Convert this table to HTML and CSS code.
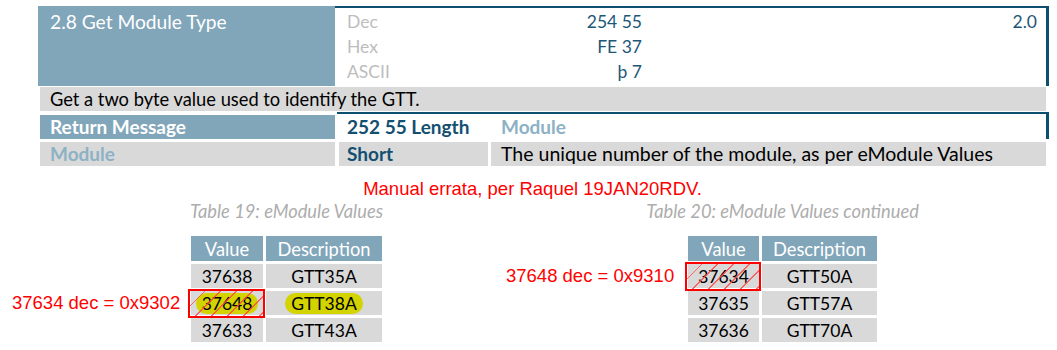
FILE: index.html
```html
<!DOCTYPE html>
<html>
<head>
<meta charset="utf-8">
<link rel="stylesheet" href="styles.css">
</head>
<body>
<div class="spec">
  <div class="cmd">
    <div class="cmd-title">2.8 Get Module Type</div>
    <div class="cmd-body">
      <div class="codes">
        <div class="code-row"><span class="lbl">Dec</span><span class="val">254 55</span></div>
        <div class="code-row"><span class="lbl">Hex</span><span class="val">FE 37</span></div>
        <div class="code-row"><span class="lbl">ASCII</span><span class="val">þ 7</span></div>
      </div>
      <div class="ver">2.0</div>
    </div>
  </div>
  <div class="desc">Get a two byte value used to identify the GTT.</div>
  <div class="ret">
    <div class="ret-title">Return Message</div>
    <div class="ret-body">
      <div class="rc2 dark">252 55 Length</div>
      <div class="rc3 light">Module</div>
    </div>
  </div>
  <div class="row2">
    <div class="c1 light">Module</div>
    <div class="c2 dark">Short</div>
    <div class="c3">The unique number of the module, as per eModule Values</div>
  </div>
</div>
<div class="errata">Manual errata, per Raquel 19JAN20RDV.</div>
<div class="tables">
  <div class="tgroup left">
    <div class="caption">Table 19: eModule Values</div>
    <div class="th col-v">Value</div><div class="th col-d">Description</div>
    <div class="td col-v">37638</div><div class="td col-d">GTT35A</div>
    <div class="note note-r2">37634 dec = 0x9302</div>
    <div class="td col-v mark"><span class="hl">37648</span></div><div class="td col-d"><span class="hl">GTT38A</span></div>
    <div class="td col-v">37633</div><div class="td col-d">GTT43A</div>
  </div>
  <div class="tgroup right">
    <div class="caption">Table 20: eModule Values continued</div>
    <div class="th col-v">Value</div><div class="th col-d">Description</div>
    <div class="note note-r1">37648 dec = 0x9310</div>
    <div class="td col-v mark">37634</div><div class="td col-d">GTT50A</div>
    <div class="td col-v">37635</div><div class="td col-d">GTT57A</div>
    <div class="td col-v">37636</div><div class="td col-d">GTT70A</div>
  </div>
</div>
</body>
</html>
```
FILE: styles.css
```css
* { box-sizing: border-box; }
body {
  margin: 0;
  background: #ffffff;
  font-family: Lato, "Open Sans", sans-serif;
  font-size: 17.5px;
  color: #000;
}
.spec {
  margin-left: 38px;
  width: 1011px;
  padding-top: 6px;
}
.cmd {
  display: flex;
  height: 80px;
}
.cmd-title {
  width: 297px;
  background: #81a6ba;
  color: #fff;
  padding: 3px 12px 0;
  line-height: 25px;
  font-size: 19.2px;
}
.cmd-body {
  flex: 1;
  display: flex;
  border-top: 2px solid #0d4f6e;
  border-right: 3px solid #0d4f6e;
  padding-top: 1px;
}
.codes {
  width: 307px;
  padding-left: 12px;
}
.code-row {
  display: flex;
  justify-content: space-between;
  line-height: 25px;
  height: 25px;
}
.lbl { color: #bdbdbd; }
.val { color: #1d5778; }
.ver {
  flex: 1;
  text-align: right;
  padding-right: 9px;
  line-height: 25px;
  color: #1d5778;
}
.desc {
  margin: 1px 3px 0 2px;
  background: #d9d9d9;
  height: 24px;
  line-height: 24px;
  padding-left: 10px;
  font-size: 18.3px;
}
.ret {
  display: flex;
  margin: 1px 0 0 2px;
  height: 27px;
  font-size: 19px;
}
.ret-title {
  width: 295px;
  margin-top: 3px;
  height: 24px;
  line-height: 24px;
  background: #81a6ba;
  color: #fff;
  font-weight: 700;
  padding-left: 10px;
}
.ret-body {
  flex: 1;
  display: flex;
  margin-left: 2px;
  border-top: 2px solid #0d4f6e;
  border-right: 3px solid #0d4f6e;
  line-height: 25px;
}
.rc2 { width: 152px; padding-left: 10px; }
.rc3 { flex: 1; padding-left: 12px; }
.dark { color: #134f70; font-weight: 700; }
.light { color: #8db1c5; font-weight: 700; }
.row2 {
  display: flex;
  margin: 3px 3px 0 2px;
  height: 24px;
  line-height: 24px;
  font-size: 19px;
}
.row2 > div { background: #d9d9d9; }
.c1 { width: 295px; padding-left: 10px; }
.c2 { width: 149px; margin-left: 4px; padding-left: 8px; }
.c3 { flex: 1; margin-left: 3px; padding-left: 10px; font-size: 19.5px; }
.errata {
  margin-top: 12px;
  padding-left: 8px;
  text-align: center;
  line-height: 22px;
  font-family: "Liberation Sans", Arial, sans-serif;
  font-size: 18.5px;
  color: #ff0000;
}
.tables {
  display: flex;
  padding-left: 12px;
}
.tgroup {
  display: grid;
  grid-template-rows: 33px 25px 24px 24px 24px;
  row-gap: 3px;
  column-gap: 3px;
}
.tgroup.left { grid-template-columns: 176px 72px 116px; }
.tgroup.right { grid-template-columns: 179px 71px 115px; margin-left: 124px; }
.caption {
  grid-column: 2 / 4;
  grid-row: 1;
  align-self: start;
  display: flex;
  justify-content: center;
  white-space: nowrap;
  line-height: 22px;
  font-style: italic;
  font-size: 18.3px;
  color: #adadad;
}
.th, .td {
  display: flex;
  align-items: center;
  justify-content: center;
}
.col-v { grid-column: 2; }
.col-d { grid-column: 3; }
.th { background: #81a6ba; color: #fff; font-size: 18.3px; }
.td { background: #d9d9d9; }
.note {
  grid-column: 1;
  align-self: center;
  font-family: "Liberation Sans", Arial, sans-serif;
  font-size: 18.5px;
  color: #ff0000;
  white-space: nowrap;
}
.note-r1 { grid-row: 3; }
.note-r2 { grid-row: 4; }
.mark { position: relative; }
.mark::after {
  content: "";
  position: absolute;
  top: -2px;
  bottom: -3px;
  left: -3px;
  right: -2px;
  border: 2px solid #ff0000;
  background: repeating-linear-gradient(135deg, transparent 0 10px, rgba(255, 70, 70, 0.8) 10px 11.2px);
}
.hl {
  background: #d3d300;
  border-radius: 11px;
  padding: 0 6px;
  line-height: 21px;
}
```
